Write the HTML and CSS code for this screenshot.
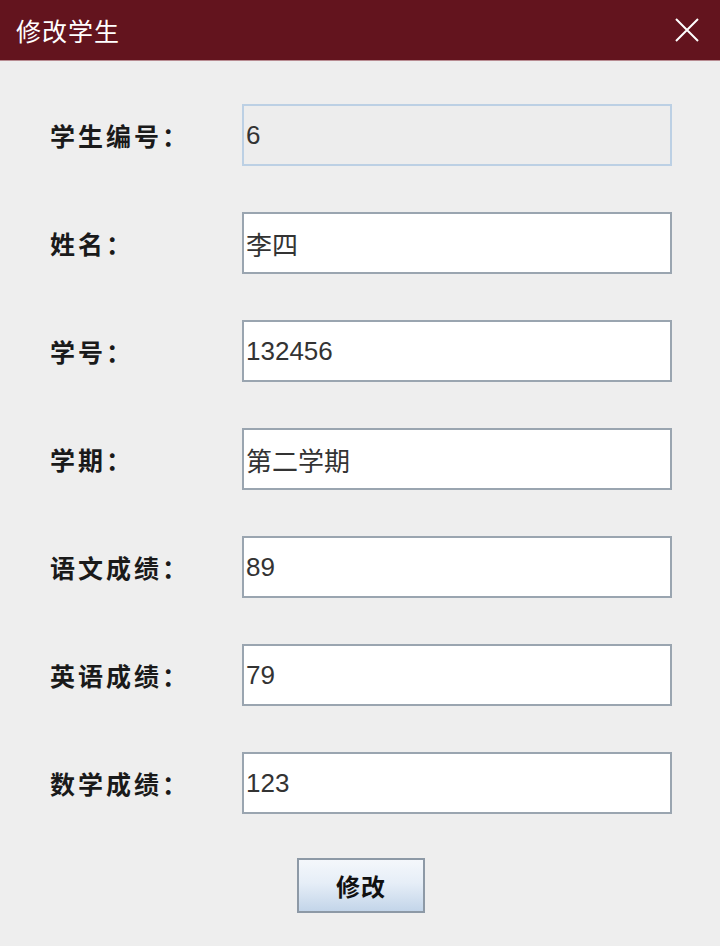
FILE: index.html
```html
<!DOCTYPE html>
<html lang="zh-CN">
<head>
    <meta charset="UTF-8">
    <meta name="viewport" content="width=device-width, initial-scale=1.0">
    <title>修改学生</title>
    <link rel="stylesheet" href="styles.css">
</head>
<body>
    <div class="title-bar">
        <span class="title">修改学生</span>
        <button class="close-btn" title="关闭">
            <svg width="24" height="24" viewBox="0 0 24 24">
                <path d="M1 1 L23 23 M23 1 L1 23" stroke="#ffffff" stroke-width="2" fill="none"/>
            </svg>
        </button>
    </div>

    <div class="form">
        <div class="form-row">
            <label for="stuId">学生编号：</label>
            <input type="text" id="stuId" class="field field-locked" value="6" readonly>
        </div>
        <div class="form-row">
            <label for="stuName">姓名：</label>
            <input type="text" id="stuName" class="field" value="李四">
        </div>
        <div class="form-row">
            <label for="stuNo">学号：</label>
            <input type="text" id="stuNo" class="field" value="132456">
        </div>
        <div class="form-row">
            <label for="term">学期：</label>
            <input type="text" id="term" class="field" value="第二学期">
        </div>
        <div class="form-row">
            <label for="chinese">语文成绩：</label>
            <input type="text" id="chinese" class="field" value="89">
        </div>
        <div class="form-row">
            <label for="english">英语成绩：</label>
            <input type="text" id="english" class="field" value="79">
        </div>
        <div class="form-row">
            <label for="math">数学成绩：</label>
            <input type="text" id="math" class="field" value="123">
        </div>

        <div class="actions">
            <button class="submit-btn">修改</button>
        </div>
    </div>
</body>
</html>
```

FILE: styles.css
```css
html, body {
    margin: 0;
    padding: 0;
    background-color: #eeeeee;
    font-family: "Liberation Sans", "Noto Sans CJK SC", sans-serif;
}
.title-bar {
    height: 60px;
    background-color: #63141e;
    border-bottom: 1px solid #b88c92;
    display: flex;
    align-items: center;
    justify-content: space-between;
    padding: 0 21px 0 16px;
}
.title {
    color: #ffffff;
    font-family: "Noto Sans CJK SC", sans-serif;
    font-size: 25px;
    letter-spacing: 1px;
}
.close-btn {
    background: none;
    border: none;
    padding: 0;
    width: 24px;
    height: 24px;
    cursor: pointer;
}
.close-btn svg {
    display: block;
}
.form {
    padding: 43px 48px 0 50px;
    display: flex;
    flex-direction: column;
    gap: 46px;
}
.form-row {
    display: grid;
    grid-template-columns: 192px 430px;
    align-items: center;
}
.form-row label {
    font-family: "Noto Sans CJK SC", sans-serif;
    font-weight: 700;
    font-size: 25px;
    letter-spacing: 3px;
    color: #1a1a1a;
}
.field {
    box-sizing: border-box;
    width: 430px;
    height: 62px;
    margin: 0;
    padding: 0 2px;
    border: 2px solid #9aa5b0;
    background-color: #ffffff;
    color: #333333;
    font-family: "Liberation Sans", "Noto Sans CJK SC", sans-serif;
    font-size: 26px;
    outline: none;
}
.field-locked {
    background-color: #ededed;
    border-color: #bcd0e4;
}
.actions {
    display: flex;
    justify-content: center;
    margin-top: -2px;
}
.submit-btn {
    width: 128px;
    height: 55px;
    border: 2px solid #8d99a6;
    background: linear-gradient(#f4f7fb, #e6eef7 45%, #c3d5e9);
    font-family: "Noto Sans CJK SC", sans-serif;
    font-weight: 700;
    font-size: 24px;
    letter-spacing: 1px;
    color: #111111;
    cursor: pointer;
}
```
